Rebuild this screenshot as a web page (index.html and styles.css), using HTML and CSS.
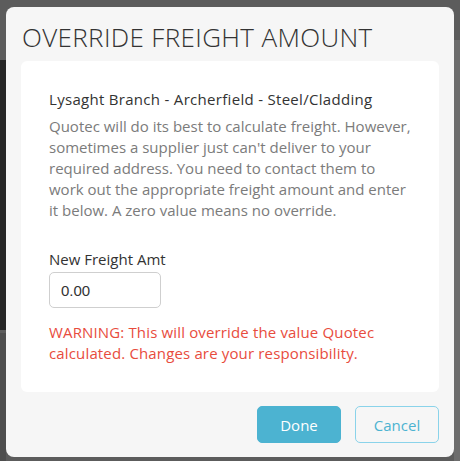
FILE: index.html
```html
<!DOCTYPE html>
<html lang="en">
<head>
<meta charset="utf-8">
<title>Override Freight Amount</title>
<link rel="stylesheet" href="styles.css">
</head>
<body>
<div class="backdrop">
  <div class="under under-left"></div>
  <div class="under under-left-low"></div>
  <div class="under under-right"></div>
  <div class="modal">
    <h1 class="modal-title">OVERRIDE FREIGHT AMOUNT</h1>
    <div class="card">
      <h2 class="supplier">Lysaght Branch - Archerfield - Steel/Cladding</h2>
      <p class="desc">Quotec will do its best to calculate freight. However,<br>sometimes a supplier just can't deliver to your<br>required address. You need to contact them to<br>work out the appropriate freight amount and enter<br>it below. A zero value means no override.</p>
      <label class="field-label" for="amt">New Freight Amt</label>
      <input class="amount-input" id="amt" type="text" value="0.00">
      <p class="warning">WARNING: This will override the value Quotec<br>calculated. Changes are your responsibility.</p>
    </div>
    <div class="actions">
      <button class="btn btn-primary" type="button">Done</button>
      <button class="btn btn-outline" type="button">Cancel</button>
    </div>
  </div>
</div>
</body>
</html>
```
FILE: styles.css
```css
html, body {
  margin: 0;
  padding: 0;
}
body {
  width: 460px;
  height: 461px;
  overflow: hidden;
  background: #5c5c5c;
  font-family: "Open Sans", "DejaVu Sans", sans-serif;
}
.backdrop {
  position: relative;
  width: 460px;
  height: 461px;
  padding-top: 7px;
  box-sizing: border-box;
}
.under {
  position: absolute;
}
.under-left {
  left: 0;
  top: 60px;
  width: 6px;
  height: 270px;
  background: #262626;
}
.under-left-low {
  left: 0;
  top: 333px;
  width: 6px;
  height: 128px;
  background: #4e4e4e;
}
.under-right {
  right: 0;
  top: 40px;
  width: 6px;
  height: 421px;
  background: #6d6d6d;
}
.modal {
  position: relative;
  margin-left: 6px;
  width: 448px;
  height: 450px;
  box-sizing: border-box;
  background: #f6f6f6;
  border-radius: 8px;
  padding: 0 15px;
  display: flex;
  flex-direction: column;
}
.modal-title {
  margin: 0 0 8px 0;
  padding: 14px 0 0 1px;
  font-size: 26px;
  line-height: 32px;
  font-weight: 300;
  letter-spacing: 0.35px;
  color: #333;
  white-space: nowrap;
}
.card {
  background: #fff;
  border-radius: 6px;
  padding: 28px 28px 28px 28px;
  display: flex;
  flex-direction: column;
  align-items: flex-start;
}
.supplier {
  margin: 0;
  font-size: 15px;
  line-height: 20px;
  font-weight: 500;
  letter-spacing: 0.3px;
  color: #333;
  white-space: nowrap;
}
.desc {
  margin: 7px 0 0 0;
  font-size: 15px;
  line-height: 21px;
  color: #7b7b7b;
  white-space: nowrap;
}
.field-label {
  margin-top: 28px;
  font-size: 15px;
  line-height: 20px;
  font-weight: 500;
  color: #333;
}
.amount-input {
  margin-top: 3px;
  width: 112px;
  height: 36px;
  box-sizing: border-box;
  border: 1px solid #cfcfcf;
  border-radius: 5px;
  padding: 0 11px;
  font-family: "Liberation Sans", Arial, sans-serif;
  font-size: 15px;
  color: #333;
  background: #fff;
  outline: none;
}
.warning {
  margin: 14px 0 0 0;
  font-size: 15px;
  line-height: 21px;
  letter-spacing: 0.15px;
  color: #e84c3d;
  white-space: nowrap;
}
.actions {
  margin-top: 14px;
  display: flex;
  justify-content: flex-end;
  gap: 14px;
}
.btn {
  width: 84px;
  height: 37px;
  box-sizing: border-box;
  border-radius: 5px;
  font-family: "Open Sans", "DejaVu Sans", sans-serif;
  font-size: 15px;
  cursor: pointer;
}
.btn-primary {
  background: #4cb3d1;
  border: 1px solid #4cb3d1;
  color: #fff;
}
.btn-outline {
  background: transparent;
  border: 1px solid #8ad3ea;
  color: #4cb3d1;
}
```
